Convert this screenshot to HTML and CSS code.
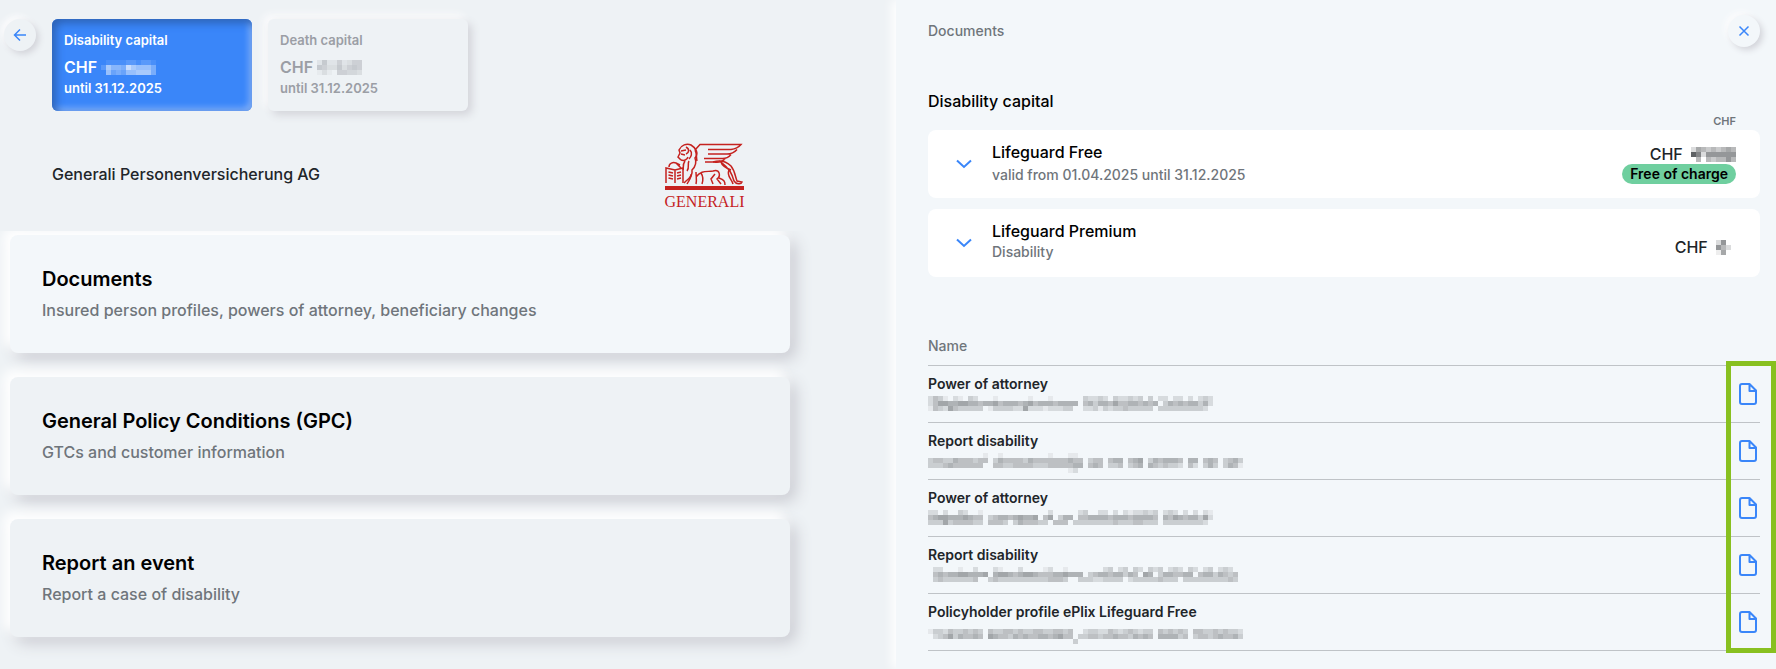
FILE: index.html
```html
<!DOCTYPE html>
<html lang="en">
<head>
    <meta charset="UTF-8">
    <meta name="viewport" content="width=device-width, initial-scale=1.0">
    <title>Documents - Generali Personenversicherung AG</title>
    <link rel="stylesheet" href="styles.css">
</head>
<body>
    <div class="layout">
        <main class="overview">
            <div class="overview-top">
                <button class="round-btn" type="button" aria-label="Back">
                    <svg width="14" height="14" viewBox="0 0 14 14"><path d="M13 7H1.5M7 1.5L1.5 7L7 12.5"/></svg>
                </button>
                <button class="capital active" type="button">
                    <span class="capital-label">Disability capital</span>
                    <span class="capital-amount">CHF <span class="mosaic" data-cells="01111221221/27554976664/06343667774"></span></span>
                    <span class="capital-until">until 31.12.2025</span>
                </button>
                <button class="capital" type="button">
                    <span class="capital-label">Death capital</span>
                    <span class="capital-amount">CHF <span class="mosaic" data-cells="2622523550/6533635650/1310554430"></span></span>
                    <span class="capital-until">until 31.12.2025</span>
                </button>
            </div>

            <div class="company">
                <h1>Generali Personenversicherung AG</h1>
                <svg class="logo" width="80" height="66" viewBox="0 0 80 66" role="img" aria-label="Generali">
                    <g class="logo-lines">
                        <path d="M1 40V25L10 27L18 25V40M1 25L10 27L18 25M10 27V40M3.5 29L8 30M3.5 32L8 33M3.5 35L8 36M12 30L16 29M12 33L16 32M12 36L16 35"/>
                        <path d="M4 24C4 20 8 19 11 20L15 22M11 20L16 25"/>
                        <path d="M16 17L13 14L15 10L14 7C16 2 22 0 26 2C31 5 34 10 30 15C32 20 30 24 27 27C28 33 24 36 21 38L19 40"/>
                        <path d="M16 8L21 7M16 11L20 12M16 17C19 18 22 17 23 14M21 4C25 6 24 10 21 11M25 7C28 10 26 14 24 16M20 18C17 22 19 25 18 27M24 18C22 21 25 24 22 28"/>
                        <path d="M30 7L35 1.5H76C73 5 70 6 66 6.500H43M72 6.5C69 10 66 11 62 11H43M66 11.5C63 15 60 16 56 15.5H39M60 16C57 19 54 20 49 19H40M30 7C32 11 31 13 32 18"/>
                        <path d="M48 19C54 17 61 18 66 23C70 28 70 33 72 38L77 39C76 42 71 41 69 38C67 31 65 26 56 19C57 23 61 25 66 27"/>
                        <path d="M26 31C27 34 24 37 22 41M31 29C31 33 32 37 31 41M31 34C36 27 42 29 48 28C55 26 56 33 52 36L56 41M48 41L46 36L50 31M36 30C38 33 38 38 37 41M64 27C61 33 67 36 68 41M54 35C59 37 60 38 60 42"/>
                    </g>
                    <rect class="logo-fill" x="0" y="43" width="79" height="4"/>
                    <text class="logo-text" x="39.5" y="64" text-anchor="middle">GENERALI</text>
                </svg>
            </div>

            <div class="cards">
                <a class="card current" href="#">
                    <h2>Documents</h2>
                    <p>Insured person profiles, powers of attorney, beneficiary changes</p>
                </a>
                <a class="card" href="#">
                    <h2>General Policy Conditions (GPC)</h2>
                    <p>GTCs and customer information</p>
                </a>
                <a class="card" href="#">
                    <h2>Report an event</h2>
                    <p>Report a case of disability</p>
                </a>
            </div>
        </main>

        <aside class="details">
            <div class="details-top">
                <span class="details-title">Documents</span>
                <button class="round-btn" type="button" aria-label="Close">
                    <svg width="12" height="12" viewBox="0 0 12 12"><path d="M1.5 1.5L10.5 10.5M10.5 1.5L1.5 10.5"/></svg>
                </button>
            </div>

            <h2 class="section-title">Disability capital</h2>
            <div class="currency">CHF</div>

            <div class="plan">
                <button class="toggle" type="button" aria-label="Expand Lifeguard Free">
                    <svg width="16" height="10" viewBox="0 0 16 10"><path d="M1 1.5L8 8L15 1.5"/></svg>
                </button>
                <div class="plan-info roomy">
                    <h3>Lifeguard Free</h3>
                    <p>valid from 01.04.2025 until 31.12.2025</p>
                </div>
                <div class="plan-price">
                    <span class="price">CHF <span class="mosaic" data-cells="254343454/972666666/040434464"></span></span>
                    <span class="badge">Free of charge</span>
                </div>
            </div>

            <div class="plan">
                <button class="toggle" type="button" aria-label="Expand Lifeguard Premium">
                    <svg width="16" height="10" viewBox="0 0 16 10"><path d="M1 1.5L8 8L15 1.5"/></svg>
                </button>
                <div class="plan-info">
                    <h3>Lifeguard Premium</h3>
                    <p>Disability</p>
                </div>
                <div class="plan-price low">
                    <span class="price">CHF <span class="mosaic" data-cells="2600/6420/1500"></span></span>
                </div>
            </div>

            <div class="files">
                <table>
                    <thead>
                        <tr><th colspan="2">Name</th></tr>
                    </thead>
                    <tbody>
                        <tr>
                            <td>Power of attorney<span class="mosaic line" data-cells="243102103200010000001000100000032232032232303022022020232/246655665545564555456455545555045355464455454503545455352/143264333330133332262221222330022313233433333033333333320"></span></td>
                            <td><a href="#" aria-label="Open power of attorney"></a></td>
                        </tr>
                        <tr>
                            <td>Report disability<span class="mosaic line" data-cells="000000000001001000000000100011000000000000000000000000000000000/344335444344035444435444444454403440455045603545554055045403453/333454444440044334444333444445504540334034505434332042035303541/000000000000000000000000000012000000000000000000000000000000000"></span></td>
                            <td><a href="#" aria-label="Open report disability"></a></td>
                        </tr>
                        <tr>
                            <td>Power of attorney<span class="mosaic line" data-cells="220200320010000000000000200000230022020212232302320202021/456655565440345545655604603550445555455545555405465455362/333634444330444303544433044403333333343334433303333333320"></span></td>
                            <td><a href="#" aria-label="Open power of attorney"></a></td>
                        </tr>
                        <tr>
                            <td>Report disability<span class="mosaic line" data-cells="02200010020002100020000120010000000230230320323023203202302320/04545566555605665456654445565550345545535406503554455045535434/03433333340034333333333344430033322333302333334333033333333343"></span></td>
                            <td><a href="#" aria-label="Open report disability"></a></td>
                        </tr>
                        <tr>
                            <td>Policyholder profile ePlix Lifeguard Free<span class="mosaic line" data-cells="000000000000000000000000000000000000000000000000000000000000000/133243343430433443433443344340023322432343233043434304433434332/023463544540654435454455456440334434454435454055553403443454453/000000000000000000000000000003000000000000000000000000000000000"></span></td>
                            <td><a href="#" aria-label="Open policyholder profile"></a></td>
                        </tr>
                    </tbody>
                </table>
                <div class="highlight"></div>
            </div>
        </aside>
    </div>

    <script src="script.js"></script>
</body>
</html>
```
FILE: styles.css
```css
* {
    box-sizing: border-box;
}

body {
    margin: 0;
    font-family: Inter, "Liberation Sans", sans-serif;
    font-weight: 500;
    color: #212529;
    background-color: #eef2f5;
}

h1, h2, h3, p {
    margin: 0;
}

button {
    font: inherit;
    border: none;
    cursor: pointer;
}

svg {
    display: block;
}

.layout {
    display: grid;
    grid-template-columns: 56fr 55fr;
    min-height: 100vh;
}

/* left side */
.overview-top {
    display: flex;
    align-items: flex-start;
    gap: 16px;
    padding: 19px 4px 0;
}

.round-btn {
    display: flex;
    align-items: center;
    justify-content: center;
    width: 32px;
    height: 32px;
    padding: 0;
    border-radius: 50%;
    background-color: inherit;
    box-shadow: 3px 3px 6px #d3d4da, -3px -3px 6px #fcfcfd;
}

.round-btn path,
.toggle path {
    fill: none;
    stroke: #3a86f9;
    stroke-width: 2;
}

.round-btn path {
    stroke-width: 1.5;
}

.overview .round-btn {
    background-color: #eef2f5;
}

.capital {
    display: flex;
    flex-direction: column;
    width: 200px;
    height: 92px;
    padding: 11px 12px 13px;
    border-radius: 6px;
    text-align: left;
    color: #9b9ea5;
    background-color: #eef2f5;
    box-shadow: 4px 4px 8px #d3d4da, -4px -4px 8px #fcfcfd;
}

.capital.active {
    color: #fff;
    background-color: #3a86f9;
    box-shadow: inset 4px 4px 8px #2c62b5, inset -3px -3px 6px #85b2fa;
}

.capital-label,
.capital-until {
    font-size: 13px;
    line-height: 20px;
    font-weight: 600;
}

.capital-label {
    margin-bottom: 6px;
}

.capital-amount {
    font-size: 16px;
    line-height: 22px;
    font-weight: 600;
}

.company {
    display: flex;
    align-items: center;
    justify-content: space-between;
    padding: 32px 151px 22px 52px;
}

.company h1 {
    padding-bottom: 4px;
    font-size: 16px;
    line-height: 20px;
    font-weight: 500;
}

.logo-lines {
    fill: none;
    stroke: #c5221f;
    stroke-width: 1.5;
}

.logo-fill,
.logo-text {
    fill: #c5221f;
}

.logo {
    overflow: visible;
}

.logo-text {
    font-family: "Liberation Serif", serif;
    font-size: 16px;
}

.cards {
    display: flex;
    flex-direction: column;
    gap: 24px;
    padding: 4px 106px 30px 10px;
    overflow: hidden;
}

.card {
    padding: 31px 32px;
    border-radius: 8px;
    color: #6f757b;
    text-decoration: none;
    background-color: #eef2f5;
    box-shadow: -6px -6px 12px 1px #fff, 6px 6px 16px #c9cad1;
}

.card.current {
    background-color: #f3f7fa;
}

.card h2 {
    margin-bottom: 6px;
    font-size: 20px;
    line-height: 26px;
    font-weight: 600;
    color: #000;
}

.card p {
    font-size: 16px;
    line-height: 24px;
}

/* right side */
.details {
    padding: 15px 16px 0 32px;
    background-color: #f3f7fa;
    box-shadow: -4px 0 10px #fff;
}

.details-top {
    display: flex;
    align-items: center;
    justify-content: space-between;
    margin-bottom: 44px;
    background-color: #f3f7fa;
}

.details-title {
    font-size: 14px;
    line-height: 20px;
    color: #6f757b;
}

.section-title {
    font-size: 16px;
    line-height: 20px;
    font-weight: 500;
    color: #000;
}

.currency {
    padding: 3px 24px 2px 0;
    font-size: 11px;
    line-height: 14px;
    font-weight: 600;
    text-align: right;
    color: #6f757b;
}

.plan {
    display: flex;
    align-items: center;
    height: 68px;
    margin-bottom: 11px;
    padding: 0 24px;
    border-radius: 8px;
    background-color: #fff;
}

.toggle {
    width: 40px;
    padding: 4px;
    background: none;
}

.plan-info {
    padding-bottom: 2px;
}

.plan-info.roomy {
    padding-bottom: 0;
}

.plan-info h3 {
    font-size: 16px;
    line-height: 20px;
    font-weight: 500;
    color: #000;
}

.plan-info.roomy h3 {
    margin-bottom: 2px;
}

.plan-info p {
    font-size: 14px;
    line-height: 22px;
    color: #6f757b;
}

.plan-price {
    display: flex;
    flex-direction: column;
    align-items: flex-end;
    margin-left: auto;
}

.plan-price.low {
    padding-top: 8px;
}

.plan-price .mosaic {
    margin-left: 4px;
}

.price {
    font-size: 16px;
    line-height: 20px;
}

.badge {
    padding: 0 8px;
    border-radius: 10px;
    font-size: 14px;
    line-height: 20px;
    font-weight: 600;
    color: #000;
    background-color: #6fcf9f;
}

.files {
    position: relative;
    margin-top: 59px;
}

.files table {
    width: 100%;
    border-collapse: collapse;
}

.files th {
    height: 29px;
    padding: 0 0 8px;
    font-size: 14px;
    line-height: 20px;
    font-weight: 500;
    text-align: left;
    color: #6f757b;
    border-bottom: 1px solid #bfc3c7;
}

.files td {
    height: 57px;
    padding: 8px 0;
    font-size: 14px;
    line-height: 20px;
    font-weight: 600;
    vertical-align: top;
    border-bottom: 1px solid #bfc3c7;
}

.files td a {
    display: block;
    width: 18px;
    margin: 9px 3px 0 auto;
}

.files td path {
    fill: none;
    stroke: #3a86f9;
    stroke-width: 2;
    stroke-linejoin: round;
}

.highlight {
    position: absolute;
    top: 25px;
    right: -16px;
    bottom: -2px;
    width: 50px;
    border: 5px solid #88c020;
    pointer-events: none;
}

/* hidden values */
.mosaic {
    display: inline-block;
    vertical-align: -2px;
}

.mosaic.line {
    display: block;
    height: 15px;
    margin-top: 2px;
    opacity: 0.8;
}

.mosaic svg {
    fill: currentColor;
}
```
FILE: script.js
```js
// one digit per 5px cell, rows split by "/", a higher digit is a darker cell
document.querySelectorAll('.mosaic').forEach(el => {
    const rows = el.dataset.cells.split('/');
    const width = Math.max(...rows.map(row => row.length)) * 5;
    let rects = '';
    rows.forEach((row, y) => {
        [...row].forEach((level, x) => {
            if (level > 0) {
                rects += `<rect x="${x * 5}" y="${y * 5}" width="5" height="5" opacity="${level * 0.08}"/>`;
            }
        });
    });
    el.innerHTML = `<svg width="${width}" height="${rows.length * 5}">${rects}</svg>`;
});

document.querySelectorAll('.files td a').forEach(el => {
    el.innerHTML = '<svg width="18" height="22" viewBox="0 0 18 22"><path d="M3 1H10.5L17 7.5V19Q17 21 15 21H3Q1 21 1 19V3Q1 1 3 1ZM10.5 1V8H17"/></svg>';
});
```
